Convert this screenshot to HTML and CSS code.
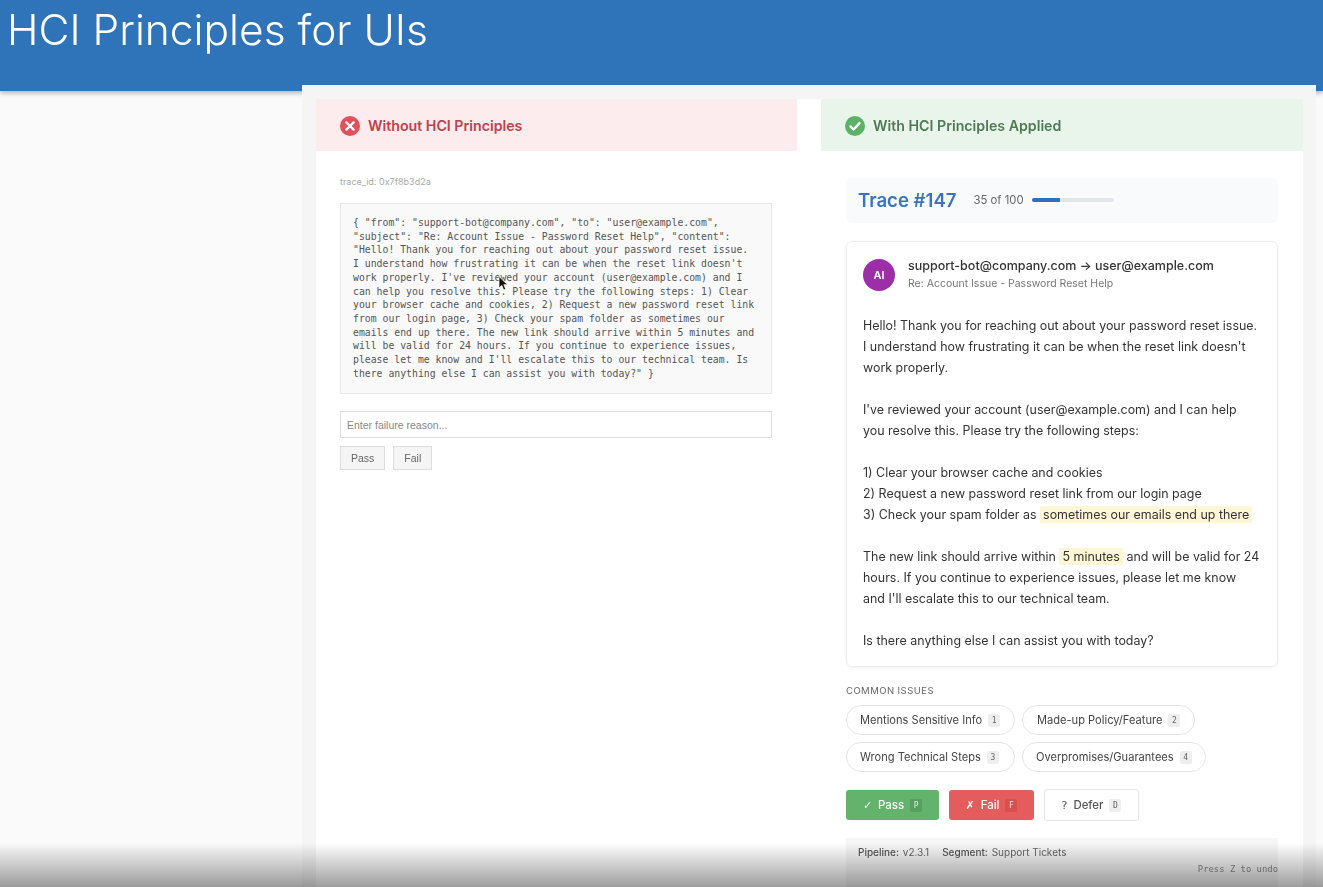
FILE: index.html
```html
<!DOCTYPE html>
<html lang="en">
<head>
    <meta charset="UTF-8">
    <meta name="viewport" content="width=device-width, initial-scale=1.0">
    <title>HCI Principles for UIs</title>
    <link rel="stylesheet" href="styles.css">
</head>
<body>
    <header class="slide-header">
        <h1>HCI Principles for UIs</h1>
    </header>

    <main class="panel">
        <div class="columns">
            <section class="column">
                <div class="column-head head-bad">
                    <svg class="head-icon" viewBox="0 0 20 20"><circle cx="10" cy="10" r="10" fill="#e2505c"/><path d="M6.4 6.4l7.2 7.2M13.6 6.4l-7.2 7.2" stroke="#fff" stroke-width="2.4" stroke-linecap="round"/></svg>
                    <span>Without HCI Principles</span>
                </div>
                <div class="raw-body">
                    <div class="trace-id">trace_id: 0x7f8b3d2a</div>
                    <div class="raw-box">
                        { "from": "support-bot@company.com", "to": "user@example.com", "subject": "Re: Account Issue - Password Reset Help", "content": "Hello! Thank you for reaching out about your password reset issue. I understand how frustrating it can be when the reset link doesn't work properly. I've reviewed your account (user@example.com) and I can help you resolve this. Please try the following steps: 1) Clear your browser cache and cookies, 2) Request a new password reset link from our login page, 3) Check your spam folder as sometimes our emails end up there. The new link should arrive within 5 minutes and will be valid for 24 hours. If you continue to experience issues, please let me know and I'll escalate this to our technical team. Is there anything else I can assist you with today?" }
                        <svg class="cursor" viewBox="0 0 10 15"><path d="M1 0.5v11.5l2.8-2.6 1.9 4.6 2-.9-1.9-4.4h3.7z" fill="#111" stroke="#fff" stroke-width=".7"/></svg>
                    </div>
                    <input class="reason" type="text" placeholder="Enter failure reason...">
                    <div class="plain-buttons">
                        <button class="plain-button">Pass</button>
                        <button class="plain-button">Fail</button>
                    </div>
                </div>
            </section>

            <section class="column">
                <div class="column-head head-good">
                    <svg class="head-icon" viewBox="0 0 20 20"><circle cx="10" cy="10" r="10" fill="#5cb367"/><path d="M5.5 10.4l3.1 3.1 5.9-6.4" fill="none" stroke="#fff" stroke-width="2.4" stroke-linecap="round" stroke-linejoin="round"/></svg>
                    <span>With HCI Principles Applied</span>
                </div>
                <div class="review-body">
                    <div class="trace-bar">
                        <h2>Trace #147</h2>
                        <span class="trace-count">35 of 100</span>
                        <div class="progress"><div class="progress-fill" style="width: 35%"></div></div>
                    </div>

                    <article class="email-card">
                        <div class="email-head">
                            <div class="avatar">AI</div>
                            <div>
                                <div class="email-route">support-bot@company.com → user@example.com</div>
                                <div class="email-subject">Re: Account Issue - Password Reset Help</div>
                            </div>
                        </div>
                        <p>Hello! Thank you for reaching out about your password reset issue. I understand how frustrating it can be when the reset link doesn't work properly.</p>
                        <p>I've reviewed your account (user@example.com) and I can help you resolve this. Please try the following steps:</p>
                        <p>1) Clear your browser cache and cookies<br>2) Request a new password reset link from our login page<br>3) Check your spam folder as <mark>sometimes our emails end up there</mark></p>
                        <p>The new link should arrive within <mark>5 minutes</mark> and will be valid for 24 hours. If you continue to experience issues, please let me know and I'll escalate this to our technical team.</p>
                        <p>Is there anything else I can assist you with today?</p>
                    </article>

                    <div class="issues-label">COMMON ISSUES</div>
                    <div class="chips">
                        <div class="chip chip-a"><span>Mentions Sensitive Info</span><kbd>1</kbd></div>
                        <div class="chip chip-b"><span>Made-up Policy/Feature</span><kbd>2</kbd></div>
                        <div class="chip chip-c"><span>Wrong Technical Steps</span><kbd>3</kbd></div>
                        <div class="chip chip-d"><span>Overpromises/Guarantees</span><kbd>4</kbd></div>
                    </div>

                    <div class="actions">
                        <button class="action action-pass"><span class="action-mark">✓</span><span>Pass</span><kbd>P</kbd></button>
                        <button class="action action-fail"><span class="action-mark">✗</span><span>Fail</span><kbd>F</kbd></button>
                        <button class="action action-defer"><span class="action-mark">?</span><span>Defer</span><kbd>D</kbd></button>
                    </div>

                    <div class="meta-bar">
                        <span><b>Pipeline:</b> v2.3.1</span>
                        <span><b>Segment:</b> Support Tickets</span>
                    </div>
                    <div class="undo-hint">Press Z to undo</div>
                </div>
            </section>
        </div>
    </main>

    <div class="bottom-fade"></div>
</body>
</html>
```

FILE: styles.css
```css
* {
    box-sizing: border-box;
}
html, body {
    height: 887px;
    overflow: hidden;
}
body {
    margin: 0;
    background-color: #fafafa;
    font-family: Inter, "Liberation Sans", sans-serif;
    color: #333;
}
.slide-header {
    height: 91px;
    background-color: #2f74b8;
    box-shadow: 0 2px 5px rgba(0, 0, 0, 0.3);
    padding: 5px 7px;
}
.slide-header h1 {
    margin: 0;
    font-size: 42.5px;
    line-height: 50px;
    font-weight: 300;
    color: #fff;
    filter: blur(0.3px);
}
.panel {
    position: relative;
    width: 1014px;
    height: 802px;
    margin: -6px 0 0 302px;
    padding: 14px 13px 0 14px;
    background-color: #f5f5f5;
    filter: blur(0.35px);
}
.columns {
    display: grid;
    grid-template-columns: 481px 482px;
    gap: 24px;
    height: 100%;
    background-color: #fff;
}
.column-head {
    display: flex;
    align-items: center;
    gap: 8px;
    height: 52px;
    padding: 1px 0 0 24px;
    font-size: 14.2px;
    font-weight: 600;
}
.head-icon {
    width: 20px;
    height: 20px;
}
.head-bad {
    background-color: #fdecee;
    color: #c0404c;
}
.head-good {
    background-color: #e9f4ea;
    color: #4f7a55;
}

/* left column */
.raw-body {
    padding: 25px 25px 25px 24px;
}
.trace-id {
    font-size: 9px;
    line-height: 12px;
    color: #aaa;
    margin-bottom: 15px;
}
.raw-box {
    position: relative;
    height: 191px;
    padding: 12px 12px;
    background-color: #f9f9f9;
    border: 1px solid #e6e6e6;
    font-family: "DejaVu Sans Mono", monospace;
    font-size: 9.8px;
    line-height: 13.72px;
    color: #555;
}
.cursor {
    position: absolute;
    left: 157px;
    top: 72px;
    width: 10px;
    height: 15px;
}
.reason {
    display: block;
    width: 100%;
    height: 27px;
    margin-top: 17px;
    padding: 0 6px;
    border: 1px solid #ddd;
    background-color: #fff;
    font-family: "Liberation Sans", sans-serif;
    font-size: 10.5px;
}
.reason::placeholder {
    color: #888;
}
.plain-buttons {
    display: flex;
    gap: 8px;
    margin-top: 8px;
}
.plain-button {
    height: 24px;
    padding: 0 10px;
    border: 1px solid #ddd;
    background-color: #f5f5f5;
    font-family: "Liberation Sans", sans-serif;
    font-size: 10.5px;
    color: #666;
}

/* right column */
.review-body {
    padding: 27px 25px 0;
}
.trace-bar {
    display: flex;
    align-items: center;
    height: 45px;
    padding: 0 12px 2px;
    background-color: #f8fafc;
    border-radius: 6px;
}
.trace-bar h2 {
    margin: 0 17px 0 0;
    font-size: 18.6px;
    font-weight: 600;
    color: #3a74c0;
}
.trace-count {
    font-size: 11.3px;
    color: #666;
    margin-right: 8px;
}
.progress {
    width: 82px;
    height: 4px;
    border-radius: 2px;
    background-color: #e2e5e9;
    overflow: hidden;
}
.progress-fill {
    height: 100%;
    background-color: #2f6fc0;
}
.email-card {
    height: 426px;
    margin-top: 18px;
    padding: 15px 16px 0;
    background-color: #fff;
    border: 1px solid #eee;
    border-radius: 6px;
    box-shadow: 0 1px 3px rgba(0, 0, 0, 0.06);
}
.email-head {
    display: flex;
    align-items: center;
    gap: 13px;
    margin-bottom: 23px;
}
.avatar {
    width: 32px;
    height: 32px;
    flex: none;
    border-radius: 50%;
    background-color: #9c2fa8;
    color: #fff;
    font-size: 11px;
    font-weight: 600;
    line-height: 32px;
    text-align: center;
}
.email-route {
    font-size: 12.5px;
    font-weight: 500;
    line-height: 18px;
    color: #333;
}
.email-subject {
    margin-top: 1px;
    font-size: 10.5px;
    line-height: 16px;
    color: #777;
}
.email-card p {
    margin: 0 0 21px;
    font-size: 12.45px;
    line-height: 21px;
    color: #333;
}
mark {
    padding: 1px 3px;
    border-radius: 2px;
    background-color: #fff6d6;
    color: inherit;
}
.issues-label {
    margin-top: 18px;
    font-size: 9.5px;
    line-height: 12px;
    letter-spacing: 0.45px;
    color: #666;
}
.chips {
    display: grid;
    grid-template-columns: 169px 184px;
    gap: 7px;
    margin-top: 8px;
}
.chip {
    display: flex;
    align-items: center;
    gap: 6px;
    height: 30px;
    padding: 0 13px;
    border: 1px solid #e4e4e4;
    border-radius: 15px;
    font-size: 11.1px;
    color: #444;
    white-space: nowrap;
}
.chip-b {
    width: 173px;
    padding-left: 14px;
}
kbd {
    display: inline-block;
    min-width: 12px;
    padding: 1px 3px;
    border-radius: 2px;
    background-color: #eee;
    font-family: "DejaVu Sans Mono", monospace;
    font-size: 8px;
    line-height: 11px;
    text-align: center;
    color: #666;
}
.actions {
    display: flex;
    align-items: center;
    gap: 10px;
    height: 30px;
    margin-top: 18px;
}
.action {
    display: flex;
    align-items: center;
    justify-content: center;
    gap: 6px;
    height: 30px;
    padding: 0;
    border: 0;
    border-radius: 3px;
    font-family: Inter, "Liberation Sans", sans-serif;
    font-size: 11.4px;
    font-weight: 500;
}
.action-mark {
    font-family: "DejaVu Sans", sans-serif;
    font-weight: 700;
    font-size: 11px;
}
.action-pass {
    width: 93px;
    background-color: #63b36c;
    color: #fff;
}
.action-pass kbd {
    background-color: #55a05e;
    color: #d8f0da;
}
.action-fail {
    width: 85px;
    background-color: #e45c5c;
    color: #fff;
}
.action-fail kbd {
    background-color: #d65050;
    color: #fbdcdc;
}
.action-defer {
    width: 95px;
    height: 32px;
    background-color: #fff;
    border: 1.5px solid #e6e6e6;
    color: #555;
}
.action-defer .action-mark {
    font-weight: 400;
}
.meta-bar {
    display: flex;
    gap: 13px;
    height: 50px;
    margin-top: 18px;
    padding: 8px 12px;
    background-color: #f6f6f6;
    font-size: 10px;
    line-height: 12px;
    color: #666;
}
.meta-bar b {
    font-weight: 500;
    color: #555;
    margin-right: 1px;
}
.undo-hint {
    position: absolute;
    right: 38px;
    top: 778px;
    font-family: "DejaVu Sans Mono", monospace;
    font-size: 8.9px;
    line-height: 12px;
    color: #888;
}
.bottom-fade {
    position: absolute;
    left: 0;
    right: 0;
    bottom: 0;
    height: 44px;
    background: linear-gradient(to bottom, rgba(0, 0, 0, 0), rgba(0, 0, 0, 0.38));
    pointer-events: none;
}
```
